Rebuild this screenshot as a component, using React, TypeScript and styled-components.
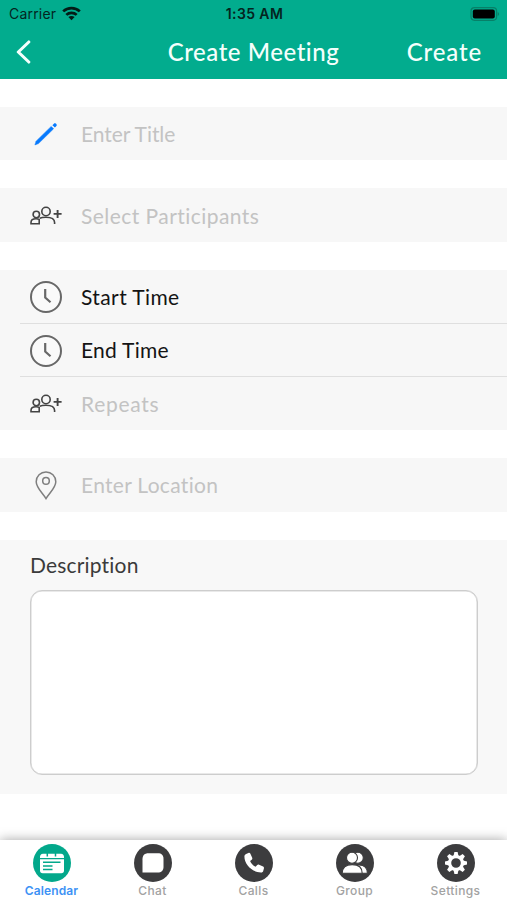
import React from 'react';
import styled, { createGlobalStyle } from 'styled-components';

const GlobalStyle = createGlobalStyle`
  *, *::before, *::after { box-sizing: border-box; }
  body { margin: 0; background: #fff; font-family: Lato, sans-serif; font-variant-ligatures: none; }
  button { border: 0; padding: 0; background: none; font: inherit; color: inherit; }
  svg { display: block; flex: none; }
`;

const Screen = styled.div`
  display: flex;
  flex-direction: column;
  height: 900px;
  overflow: hidden;
  background: #fff;
`;

const Header = styled.header`
  flex: none;
  height: 79px;
  background: #02ac8e;
`;

const StatusBar = styled.div`
  display: grid;
  grid-template-columns: 1fr auto 1fr;
  align-items: center;
  height: 27px;
  padding: 0 7px 0 9px;
  color: #04251f;
  font: 400 14px/27px Inter, sans-serif;
`;

const Carrier = styled.div`
  display: flex;
  align-items: center;
  gap: 6px;
  letter-spacing: 0.2px;
`;

const Clock = styled.div`
  font-weight: 600;
  letter-spacing: 0.4px;
`;

const BatterySlot = styled.div`
  display: flex;
  justify-content: flex-end;
`;

const NavBar = styled.nav`
  display: grid;
  grid-template-columns: 1fr auto 1fr;
  align-items: center;
  height: 49px;
  padding: 0 25px 0 16px;
  color: #f4fffc;
  font-size: 24px;
  line-height: 48px;
`;

const BackButton = styled.button`
  justify-self: start;
`;

const Title = styled.h1`
  margin: 0 0 0 9px;
  font-size: 24px;
  font-weight: 500;
  letter-spacing: 0.54px;
`;

const CreateButton = styled.button`
  justify-self: end;
  font-weight: 500;
  letter-spacing: 0.85px;
`;

const Form = styled.main`
  display: flex;
  flex: 1;
  flex-direction: column;
  gap: 28px;
  padding-top: 28px;
`;

const Section = styled.section<{ $height: number }>`
  display: flex;
  flex: none;
  flex-direction: column;
  height: ${(p) => p.$height}px;
  background: #f7f7f7;
`;

const Field = styled.div<{ $divided?: boolean }>`
  display: flex;
  flex: 1;
  align-items: center;
  margin-left: 20px;
  padding-left: 10px;
  border-bottom: ${(p) => (p.$divided ? '1px solid #dfdfdf' : '0')};
`;

const IconSlot = styled.span<{ $drop?: boolean }>`
  display: flex;
  justify-content: center;
  width: 32px;
  margin-right: 19px;
  padding-top: ${(p) => (p.$drop ? 1 : 0)}px;
`;

const Label = styled.span<{ $muted?: boolean; $tracking: number; $lift?: boolean }>`
  padding-top: ${(p) => (p.$lift ? 0 : 1)}px;
  padding-bottom: ${(p) => (p.$lift ? 1 : 0)}px;
  color: ${(p) => (p.$muted ? '#c3c3c3' : '#141414')};
  font-size: 21px;
  line-height: 26px;
  letter-spacing: ${(p) => p.$tracking}px;
`;

const Description = styled.section`
  display: flex;
  flex: none;
  flex-direction: column;
  height: 254px;
  padding: 12px 29px 19px 30px;
  background: #f8f8f8;
`;

const DescriptionLabel = styled.label`
  height: 38px;
  color: #3b3b3b;
  font-size: 21px;
  line-height: 26px;
  letter-spacing: 0.18px;
`;

const TextArea = styled.textarea`
  flex: 1;
  border: 1px solid #cdcdcd;
  border-radius: 12px;
  background: #fff;
  box-shadow: inset 0 0 0 0.5px #d3d3d3;
  resize: none;
  outline: none;
`;

const TabBar = styled.nav`
  display: flex;
  flex: none;
  height: 60px;
  padding: 4px 1px 0;
  background: #fff;
  box-shadow: 0 0 11px rgba(0, 0, 0, 0.36);
`;

const Tab = styled.button<{ $active?: boolean }>`
  display: flex;
  flex: 1;
  flex-direction: column;
  align-items: center;
  color: ${(p) => (p.$active ? '#3d92f5' : '#a2a2a2')};
  font: ${(p) => (p.$active ? 600 : 500)} 12px/18px Inter, sans-serif;
  letter-spacing: ${(p) => (p.$active ? 0.1 : 0.38)}px;
`;

const TabIcon = styled.span<{ $active?: boolean }>`
  display: flex;
  align-items: center;
  justify-content: center;
  width: 38px;
  height: 38px;
  border-radius: 50%;
  background: ${(p) => (p.$active ? '#02a88b' : '#3c3c3e')};
`;

const Wifi = () => (
  <svg width="19" height="15" viewBox="0 0 19 15" fill="none" stroke="#031c17" strokeWidth="2.7">
    <path d="M1.2 5.4C5.8.9 13.2.9 17.8 5.4" />
    <path d="M4.3 8.9c2.9-2.8 7.5-2.8 10.4 0" />
    <path d="M9.5 14.3 6.4 11.1c1.7-1.6 4.5-1.6 6.2 0z" fill="#031c17" stroke="none" />
  </svg>
);

const Battery = () => (
  <svg width="30" height="14" viewBox="0 0 30 14">
    <rect x="1" y=".7" width="25.6" height="12.6" rx="3.5" fill="none" stroke="#078068" strokeWidth="1.2" />
    <rect x="2.8" y="2.5" width="22" height="9" rx="2" fill="#000" />
    <path d="M27.7 5c1.9.6 1.9 3.4 0 4z" fill="#078068" />
  </svg>
);

const BackArrow = () => (
  <svg width="16" height="24" viewBox="0 0 16 24" fill="none" stroke="#f4fffc" strokeWidth="3.1" strokeLinecap="round" strokeLinejoin="round">
    <path d="M12.8 2 2.3 12l10.5 10" />
  </svg>
);

const Pencil = () => (
  <svg width="24" height="24" viewBox="0 0 24 24" fill="#087afd">
    <path d="m.9 22.900 1.200-3.700L17.200 4.400l2.400 2.400L4.500 21.600z" stroke="#087afd" strokeWidth=".5" strokeLinejoin="round" />
    <path d="m18.400 3.200 1.500-1.500c1.300-1.300 3.800 1.100 2.500 2.400l-1.500 1.500z" />
  </svg>
);

const AddPeople = () => (
  <svg width="32" height="20" viewBox="0 0 32 20" fill="none" stroke="#444" strokeWidth="1.6">
    <circle cx="16" cy="5.5" r="4.2" />
    <path d="M9.7 12.2c1.6-.7 3.600-.900 6.200-.900 5.400 0 8.700 1.500 8.700 5.200v1.600" />
    <circle cx="6.3" cy="8.500" r="3.200" />
    <path d="M9.200 17.800H1v-1.400c0-2.600 2-3.600 5-3.600 1.100 0 2.400.200 3.200.600z" />
    <path d="M23.600 7.900h8M27.600 3.900v8" strokeWidth="1.900" />
  </svg>
);

const ClockIcon = () => (
  <svg width="32" height="32" viewBox="0 0 32 32" fill="none" stroke="#686868">
    <circle cx="16" cy="16" r="15" fill="#fafafa" strokeWidth="2" />
    <path d="M15.200 8v8.600l5.300 4.700" strokeWidth="2.200" />
  </svg>
);

const Pin = () => (
  <svg width="22" height="29" viewBox="0 0 22 29" fill="none" stroke="#7f7f7f" strokeWidth="1.5">
    <path d="M11 27.600C7.400 21.800 1.200 16.600 1.200 10.700a9.800 9.800 0 0 1 19.600 0c0 5.900-6.200 11.100-9.800 16.900z" />
    <circle cx="11" cy="9.900" r="3.300" />
  </svg>
);

const CalendarGlyph = () => (
  <svg width="26" height="22" viewBox="0 0 26 22">
    <path d="M1 6V5c0-2 1-3.300 3-3.300h18c2 0 3 1.300 3 3.300v1z" fill="#fff" />
    <path d="M1 7.200h24v11.300c0 1.800-.9 2.700-2.700 2.700H3.700C1.900 21.200 1 20.300 1 18.500z" fill="#fff" />
    <path d="M8.300 1v3.400M16.500 1v3.400" stroke="#02a88b" strokeWidth="1.500" />
    <path d="M4 10.200h17.500M4 13.900h9.500M4 17.500h9.500" stroke="#02a88b" strokeWidth="1.500" />
  </svg>
);

const ChatGlyph = () => (
  <svg width="22" height="20" viewBox="0 0 22 20" fill="#fff">
    <path d="M6.500.3h9.300c3.800 0 5.700 1.900 5.700 5.600v7.600c0 4-2 6.100-6 6.100H.5V6.300C.5 2.300 2.500.3 6.500.3z" />
  </svg>
);

const PhoneGlyph = () => (
  <svg width="22" height="22" viewBox="0 0 22 22" fill="#fff">
    <path d="M3.100 2.100 5.400 1c.9-.4 1.600-.1 2 .8l1.800 4c.3.8.1 1.400-.5 1.900L7.100 9c1 2.600 2.800 4.400 5.500 5.800l1.600-1.700c.5-.6 1.100-.7 1.900-.4l4 1.900c.8.4 1 1 .8 1.900l-.7 2.600c-.3 1-1.100 1.600-2.300 1.500C8.800 20 1.500 12.800 1.400 4.600c0-1.200.6-2 1.700-2.500z" />
  </svg>
);

const GroupGlyph = () => (
  <svg width="26" height="24" viewBox="0 0 26 24" fill="#fff" stroke="#3c3c3e" strokeWidth="1.1">
    <circle cx="15.800" cy="6.800" r="5.500" />
    <path d="M9 22.300c0-5 2.600-8.300 8-8.300s8.400 3 8.400 8.300z" />
    <circle cx="10" cy="6.800" r="5.500" />
    <path d="M.2 22.300c0-5.400 3.700-8.700 10-8.700s10 3.300 10 8.700z" />
  </svg>
);

const GearGlyph = () => (
  <svg width="24" height="24" viewBox="-12 -12 24 24">
    <g fill="#fff">
      {[0, 45, 90, 135, 180, 225, 270, 315].map((angle) => (
        <path key={angle} d="M-2.500-7-1.600-11h3.200L2.500-7z" transform={`rotate(${angle})`} />
      ))}
    </g>
    <circle r="6.400" fill="none" stroke="#fff" strokeWidth="3.200" />
  </svg>
);

const tabs = [
  { name: 'Calendar', Glyph: CalendarGlyph, active: true },
  { name: 'Chat', Glyph: ChatGlyph },
  { name: 'Calls', Glyph: PhoneGlyph },
  { name: 'Group', Glyph: GroupGlyph },
  { name: 'Settings', Glyph: GearGlyph },
];

export default function App() {
  return (
    <Screen>
      <GlobalStyle />
      <Header>
        <StatusBar>
          <Carrier>Carrier <Wifi /></Carrier>
          <Clock>1:35 AM</Clock>
          <BatterySlot><Battery /></BatterySlot>
        </StatusBar>
        <NavBar>
          <BackButton aria-label="Back"><BackArrow /></BackButton>
          <Title>Create Meeting</Title>
          <CreateButton>Create</CreateButton>
        </NavBar>
      </Header>
      <Form>
        <Section $height={53}>
          <Field><IconSlot $drop><Pencil /></IconSlot><Label $muted $tracking={-0.05}>Enter Title</Label></Field>
        </Section>
        <Section $height={54}>
          <Field><IconSlot $drop><AddPeople /></IconSlot><Label $muted $tracking={0.45}>Select Participants</Label></Field>
        </Section>
        <Section $height={160}>
          <Field $divided><IconSlot $drop><ClockIcon /></IconSlot><Label $tracking={0.4}>Start Time</Label></Field>
          <Field $divided><IconSlot $drop><ClockIcon /></IconSlot><Label $lift $tracking={0.25}>End Time</Label></Field>
          <Field><IconSlot><AddPeople /></IconSlot><Label $muted $tracking={0.7}>Repeats</Label></Field>
        </Section>
        <Section $height={54}>
          <Field><IconSlot><Pin /></IconSlot><Label $muted $lift $tracking={0.3}>Enter Location</Label></Field>
        </Section>
        <Description>
          <DescriptionLabel htmlFor="description">Description</DescriptionLabel>
          <TextArea id="description" />
        </Description>
      </Form>
      <TabBar>
        {tabs.map(({ name, Glyph, active }) => (
          <Tab key={name} $active={active}>
            <TabIcon $active={active}><Glyph /></TabIcon>
            {name}
          </Tab>
        ))}
      </TabBar>
    </Screen>
  );
}
